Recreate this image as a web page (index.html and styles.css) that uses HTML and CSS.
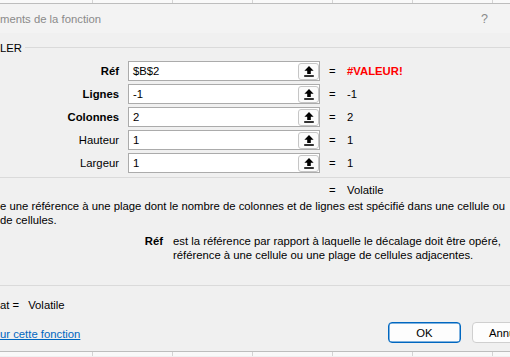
FILE: index.html
```html
<!DOCTYPE html>
<html lang="fr">
<head>
<meta charset="utf-8">
<title>Arguments de la fonction</title>
<link rel="stylesheet" href="styles.css">
</head>
<body>
<div class="sheet sheet-top"></div>
<div class="titlebar"><span class="title">ments de la fonction</span><span class="help">?</span></div>
<div class="group-head"><span class="group-name">LER</span><span class="group-line"></span></div>
<div class="fields">
  <span class="lbl bold">Réf</span>
  <div class="refedit"><span class="val">$B$2</span><span class="collapse"><svg width="10" height="11" viewBox="0 0 10 11"><path d="M5 0 L9.6 4.8 H6.8 V8 H3.2 V4.8 H0.4 Z" fill="#000"/><rect x="0.2" y="9.2" width="9.6" height="1.6" fill="#000"/></svg></span></div>
  <span class="eq">=</span><span class="res err">#VALEUR!</span>

  <span class="lbl bold">Lignes</span>
  <div class="refedit"><span class="val">-1</span><span class="collapse"><svg width="10" height="11" viewBox="0 0 10 11"><path d="M5 0 L9.6 4.8 H6.8 V8 H3.2 V4.8 H0.4 Z" fill="#000"/><rect x="0.2" y="9.2" width="9.6" height="1.6" fill="#000"/></svg></span></div>
  <span class="eq">=</span><span class="res">-1</span>

  <span class="lbl bold">Colonnes</span>
  <div class="refedit"><span class="val">2</span><span class="collapse"><svg width="10" height="11" viewBox="0 0 10 11"><path d="M5 0 L9.6 4.8 H6.8 V8 H3.2 V4.8 H0.4 Z" fill="#000"/><rect x="0.2" y="9.2" width="9.6" height="1.6" fill="#000"/></svg></span></div>
  <span class="eq">=</span><span class="res">2</span>

  <span class="lbl">Hauteur</span>
  <div class="refedit"><span class="val">1</span><span class="collapse"><svg width="10" height="11" viewBox="0 0 10 11"><path d="M5 0 L9.6 4.8 H6.8 V8 H3.2 V4.8 H0.4 Z" fill="#000"/><rect x="0.2" y="9.2" width="9.6" height="1.6" fill="#000"/></svg></span></div>
  <span class="eq">=</span><span class="res">1</span>

  <span class="lbl">Largeur</span>
  <div class="refedit"><span class="val">1</span><span class="collapse"><svg width="10" height="11" viewBox="0 0 10 11"><path d="M5 0 L9.6 4.8 H6.8 V8 H3.2 V4.8 H0.4 Z" fill="#000"/><rect x="0.2" y="9.2" width="9.6" height="1.6" fill="#000"/></svg></span></div>
  <span class="eq">=</span><span class="res">1</span>
</div>
<div class="sep"></div>
<div class="result-row"><span class="eq">=</span><span class="res">Volatile</span></div>
<p class="desc">e une référence à une plage dont le nombre de colonnes et de lignes est spécifié dans une cellule ou<br>de cellules.</p>
<div class="argdesc"><span class="argname">Réf</span><span class="argtext">est la référence par rapport à laquelle le décalage doit être opéré,<br>référence à une cellule ou une plage de cellules adjacentes.</span></div>
<div class="sep sep-bottom"></div>
<div class="formula-result"><span>at =</span><span class="fr-val">Volatile</span></div>
<div class="actions">
  <a class="help-link" href="#">ur cette fonction</a>
  <div class="buttons"><button class="btn primary">OK</button><button class="btn">Annuler</button></div>
</div>
<div class="sheet sheet-bottom"></div>
</body>
</html>
```
FILE: styles.css
```css
html, body {
  margin: 0;
  padding: 0;
}
body {
  width: 510px;
  height: 357px;
  overflow: hidden;
  background: #f0f0f0;
  font-family: "Liberation Sans", Arial, sans-serif;
  font-size: 11.3px;
  color: #000;
}
.sheet {
  height: 3px;
  background-color: #f9f9f9;
  background-image: repeating-linear-gradient(90deg, transparent 0 79px, #d4d4d4 79px 80px);
  background-position: 13px 0;
}
.sheet-top {
  border-bottom: 1px solid #bdbdbd;
}
.sheet-bottom {
  margin-top: 8px;
  height: 4px;
  border-top: 1px solid #bdbdbd;
}
.titlebar {
  height: 29px;
  background: #f3f3f3;
  display: flex;
  align-items: center;
  justify-content: space-between;
  padding-right: 22px;
  color: #8a8a8a;
}
.title {
  font-size: 11.3px;
  padding-top: 1px;
}
.help {
  font-size: 12.5px;
  color: #8a8a8a;
}
.group-head {
  margin-top: 7px;
  height: 14px;
  display: flex;
  align-items: center;
}
.group-name {
  line-height: 14px;
  padding-top: 2px;
}
.group-line {
  flex: 1;
  height: 1px;
  background: #dadada;
  margin-left: 3px;
}
.fields {
  margin-top: 7px;
  display: grid;
  grid-template-columns: 119px 192px 9px auto;
  column-gap: 9px;
  row-gap: 3px;
  grid-auto-rows: 20px;
  align-items: center;
}
.lbl {
  text-align: right;
}
.bold {
  font-weight: bold;
}
.refedit {
  box-sizing: border-box;
  height: 20px;
  border: 1px solid #ababab;
  background: #fff;
  display: flex;
  align-items: center;
}
.val {
  flex: 1;
  padding-left: 4px;
}
.collapse {
  box-sizing: border-box;
  width: 21px;
  height: 17px;
  border: 1px solid #c6c6c6;
  border-radius: 3px;
  background: #fbfbfb;
  display: flex;
  align-items: center;
  justify-content: center;
}
.collapse svg {
  display: block;
}
.eq {
  width: 9px;
}
.res.err {
  color: #ff0000;
  font-weight: bold;
}
.sep {
  margin-top: 4px;
  height: 1px;
  background: #dadada;
}
.result-row {
  margin-top: 5px;
  height: 14px;
  line-height: 14px;
  display: flex;
  gap: 9px;
  padding-left: 329px;
}
.desc {
  margin: 3px 0 0;
  line-height: 13.5px;
  white-space: nowrap;
  overflow: hidden;
}
.argdesc {
  margin-top: 8px;
  display: flex;
  gap: 10px;
  line-height: 13.5px;
  white-space: nowrap;
}
.argname {
  width: 163px;
  text-align: right;
  font-weight: bold;
}
.sep-bottom {
  margin-top: 23px;
}
.formula-result {
  margin-top: 12px;
  height: 14px;
  line-height: 14px;
  display: flex;
  gap: 9px;
}
.actions {
  margin-top: 10px;
  height: 21px;
  display: flex;
  align-items: center;
}
.help-link {
  color: #0067c0;
  text-decoration: underline;
  padding-top: 3px;
}
.buttons {
  margin-left: auto;
  margin-right: -35px;
  display: flex;
  gap: 11px;
}
.btn {
  box-sizing: border-box;
  width: 73px;
  height: 21px;
  border: 1px solid #cfcfcf;
  border-radius: 4px;
  background: #fdfdfd;
  font-family: inherit;
  font-size: 11.3px;
  color: #000;
  padding: 0;
}
.btn.primary {
  border: 1px solid #0067c0;
  box-shadow: inset 0 0 0 0.5px #0067c0;
}
```
